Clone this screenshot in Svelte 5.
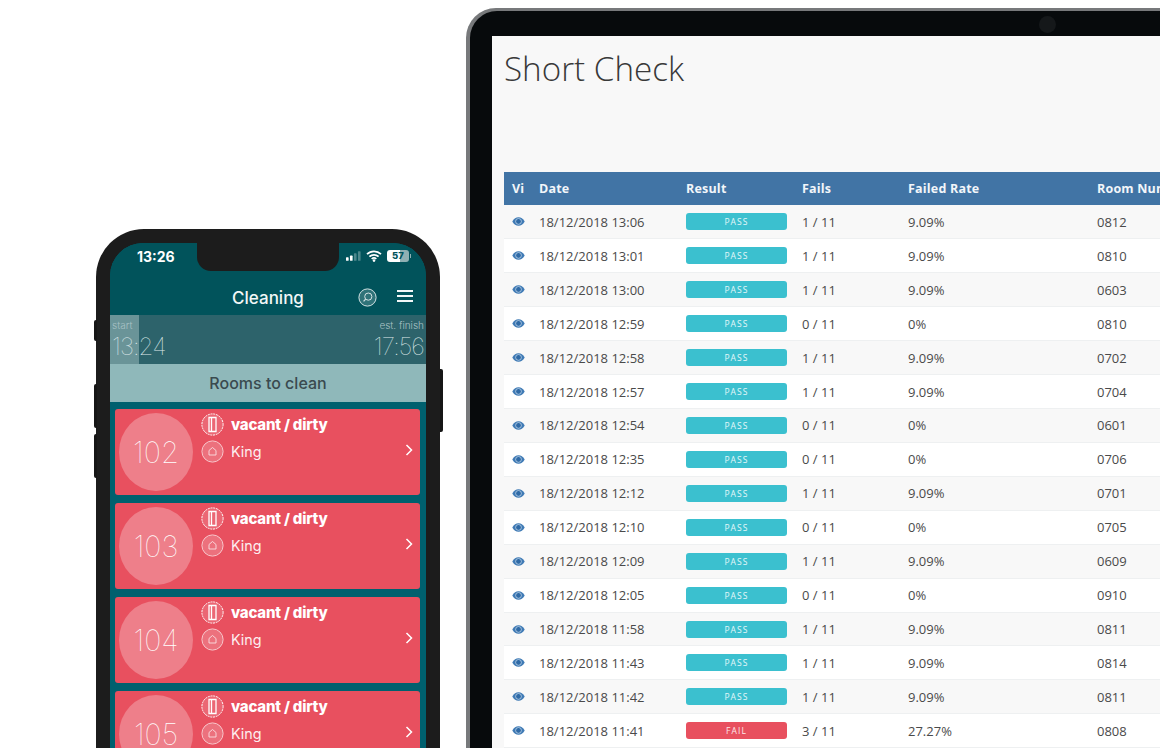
<script>
  const rooms = [102, 103, 104, 105];

  const checks = [
    ["18/12/2018 13:06", "PASS", "1 / 11", "9.09%", "0812"],
    ["18/12/2018 13:01", "PASS", "1 / 11", "9.09%", "0810"],
    ["18/12/2018 13:00", "PASS", "1 / 11", "9.09%", "0603"],
    ["18/12/2018 12:59", "PASS", "0 / 11", "0%", "0810"],
    ["18/12/2018 12:58", "PASS", "1 / 11", "9.09%", "0702"],
    ["18/12/2018 12:57", "PASS", "1 / 11", "9.09%", "0704"],
    ["18/12/2018 12:54", "PASS", "0 / 11", "0%", "0601"],
    ["18/12/2018 12:35", "PASS", "0 / 11", "0%", "0706"],
    ["18/12/2018 12:12", "PASS", "1 / 11", "9.09%", "0701"],
    ["18/12/2018 12:10", "PASS", "0 / 11", "0%", "0705"],
    ["18/12/2018 12:09", "PASS", "1 / 11", "9.09%", "0609"],
    ["18/12/2018 12:05", "PASS", "0 / 11", "0%", "0910"],
    ["18/12/2018 11:58", "PASS", "1 / 11", "9.09%", "0811"],
    ["18/12/2018 11:43", "PASS", "1 / 11", "9.09%", "0814"],
    ["18/12/2018 11:42", "PASS", "1 / 11", "9.09%", "0811"],
    ["18/12/2018 11:41", "FAIL", "3 / 11", "27.27%", "0808"]
  ];
</script>

<div class="stage">
  <div class="phone">
    <span class="btn b1"></span>
    <span class="btn b2"></span>
    <span class="btn b3"></span>
    <span class="btn b4"></span>
    <div class="screen">
      <div class="notch"></div>
      <header class="app-head">
        <div class="status">
          <span class="clock">13:26</span>
          <div class="status-icons">
            <svg width="15" height="10" viewBox="0 0 17 11">
              <rect x="0" y="7" width="3" height="4" rx="0.7" fill="#fff" />
              <rect x="4.5" y="5" width="3" height="6" rx="0.7" fill="#fff" />
              <rect x="9" y="2.5" width="3" height="8.5" rx="0.7" fill="#fff" opacity="0.3" />
              <rect x="13.5" y="0" width="3" height="11" rx="0.7" fill="#fff" opacity="0.3" />
            </svg>
            <svg width="16" height="12" viewBox="0 0 16 12">
              <path d="M1 4.2a10 10 0 0 1 14 0M3.4 6.7a6.6 6.6 0 0 1 9.2 0M5.7 9a3.3 3.3 0 0 1 4.6 0" fill="none" stroke="#fff" stroke-width="1.7" />
              <circle cx="8" cy="10.6" r="1.3" fill="#fff" />
            </svg>
            <span class="batt">57</span>
          </div>
        </div>
        <div class="title-row">
          <span class="app-title">Cleaning</span>
          <svg class="search" width="19" height="19" viewBox="0 0 19 19">
            <circle cx="9.5" cy="9.5" r="8.6" fill="#ffffff30" stroke="#d5e3e4" stroke-width="1" />
            <circle cx="10.3" cy="8.6" r="3.6" fill="none" stroke="#d5e3e4" stroke-width="1" />
            <path d="M7.6 11.2 5.6 13.4" stroke="#d5e3e4" stroke-width="1.2" />
          </svg>
          <div class="burger"><i></i><i></i><i></i></div>
        </div>
      </header>

      <div class="timeband">
        <div class="progress"></div>
        <div class="time-col">
          <span class="time-label">start</span>
          <span class="time">13:24</span>
        </div>
        <div class="time-col right">
          <span class="time-label">est. finish</span>
          <span class="time">17:56</span>
        </div>
      </div>

      <div class="section">Rooms to clean</div>

      <div class="rooms">
        {#each rooms as room}
          <div class="room">
            <div class="num">{room}</div>
            <div class="info">
              <div class="line">
                <svg class="ic" width="23" height="23" viewBox="0 0 23 23">
                  <circle cx="11.5" cy="11.5" r="10.6" fill="#ffffff22" stroke="#fff" stroke-width="1" stroke-dasharray="2 0.8" />
                  <path d="M8 4.5h7v14H8zM10.5 5v13" fill="none" stroke="#fff" stroke-width="1.3" />
                </svg>
                <strong>vacant / dirty</strong>
              </div>
              <div class="line">
                <svg class="ic" width="23" height="23" viewBox="0 0 23 23">
                  <circle cx="11.5" cy="11.5" r="10.6" fill="#ffffff30" stroke="#f7c6cb" stroke-width="1" />
                  <path d="M8 15v-4.5l3.5-3 3.5 3V15z" fill="none" stroke="#fbdfe2" stroke-width="0.9" />
                </svg>
                <span>King</span>
              </div>
            </div>
            <svg class="chev" width="8" height="12" viewBox="0 0 8 12">
              <path d="M1.5 1 6.5 6 1.5 11" fill="none" stroke="#fff" stroke-width="1.5" />
            </svg>
          </div>
        {/each}
      </div>
    </div>
  </div>

  <div class="laptop">
    <div class="bezel">
      <span class="camera"></span>
      <div class="display">
        <h1>Short Check</h1>
        <table>
          <thead>
            <tr>
              <th class="c-vi">Vi</th>
              <th class="c-date">Date</th>
              <th class="c-res">Result</th>
              <th class="c-fails">Fails</th>
              <th class="c-rate">Failed Rate</th>
              <th class="c-room">Room Number</th>
            </tr>
          </thead>
          <tbody>
            {#each checks as row}
              <tr>
                <td>
                  <svg class="eye" width="13" height="9" viewBox="0 0 13 9">
                    <path d="M0.3 4.5C2 1.6 4 0.3 6.5 0.3s4.5 1.3 6.2 4.2C11 7.4 9 8.7 6.5 8.7S2 7.4 0.3 4.5z" fill="#3f7ab5" />
                    <circle cx="6.5" cy="4.4" r="2.9" fill="#2f6aa6" stroke="#cfe0ef" stroke-width="0.7" />
                  </svg>
                </td>
                <td>{row[0]}</td>
                <td><span class="badge" class:fail={row[1] === "FAIL"}>{row[1]}</span></td>
                <td>{row[2]}</td>
                <td>{row[3]}</td>
                <td>{row[4]}</td>
              </tr>
            {/each}
          </tbody>
        </table>
      </div>
    </div>
  </div>
</div>

<style>
  :global(body) {
    background: #fff;
    overflow: hidden;
  }

  .stage {
    display: flex;
    align-items: flex-start;
    height: 748px;
    overflow: hidden;
    padding-left: 96px;
    box-sizing: border-box;
  }

  /* phone */
  .phone {
    position: relative;
    flex: none;
    width: 344px;
    margin-top: 229px;
    padding: 14px 14px 0;
    box-sizing: border-box;
    height: 560px;
    background: #1c1c1c;
    border-radius: 48px 48px 0 0;
    font-family: Inter, "Noto Sans", sans-serif;
  }

  .btn {
    position: absolute;
    background: #161616;
    width: 3px;
    left: -2px;
    border-radius: 2px 0 0 2px;
  }
  .b1 { top: 91px; height: 21px; }
  .b2 { top: 155px; height: 44px; }
  .b3 { top: 205px; height: 44px; }
  .b4 { left: auto; right: -3px; top: 140px; height: 63px; border-radius: 0 2px 2px 0; }

  .screen {
    position: relative;
    width: 316px;
    height: 546px;
    overflow: hidden;
    border-radius: 33px 33px 0 0;
    background: #00606e;
  }

  .notch {
    position: absolute;
    left: 87px;
    top: 0;
    width: 142px;
    height: 28px;
    background: #1c1c1c;
    border-radius: 0 0 14px 14px;
  }

  .app-head {
    height: 72px;
    background: #01535b;
    color: #fff;
    box-sizing: border-box;
  }

  .status {
    display: flex;
    justify-content: space-between;
    align-items: center;
    height: 26px;
    padding: 0 17px 0 27px;
  }
  .clock {
    font-size: 14px;
    font-weight: 700;
  }
  .status-icons {
    display: flex;
    align-items: center;
    gap: 5px;
  }
  .batt {
    position: relative;
    width: 22px;
    height: 12px;
    line-height: 12px;
    border-radius: 3px;
    text-align: center;
    font-size: 9.5px;
    font-weight: 800;
    color: #01535b;
    background: linear-gradient(90deg, #fff 60%, #8fb0b3 60%);
  }
  .batt::after {
    content: "";
    position: absolute;
    right: -2px;
    top: 4px;
    width: 1.5px;
    height: 4px;
    background: #8fb0b3;
  }

  .title-row {
    position: relative;
    display: flex;
    align-items: center;
    justify-content: center;
    height: 46px;
    padding-top: 12px;
    box-sizing: border-box;
  }
  .app-title {
    font-size: 17px;
    font-weight: 500;
    color: #f2f7f7;
  }
  .search {
    position: absolute;
    left: 248px;
    top: 19px;
  }
  .burger {
    position: absolute;
    left: 287px;
    top: 21px;
    width: 16px;
    display: flex;
    flex-direction: column;
    gap: 3px;
  }
  .burger i {
    display: block;
    height: 2px;
    background: #f2f7f7;
  }

  .timeband {
    position: relative;
    display: flex;
    justify-content: space-between;
    height: 49px;
    background: #2d636b;
    padding: 4px 2px 0;
    box-sizing: border-box;
  }
  .progress {
    position: absolute;
    left: 0;
    top: 0;
    bottom: 0;
    width: 29px;
    background: #6a9498;
  }
  .time-col {
    position: relative;
    display: flex;
    flex-direction: column;
  }
  .time-col.right {
    align-items: flex-end;
  }
  .time-label {
    font-size: 10px;
    line-height: 12px;
    font-weight: 300;
    color: #a9c2c5;
  }
  .time {
    font-size: 24px;
    line-height: 32px;
    font-weight: 100;
    letter-spacing: -0.9px;
    color: #dfe9ea;
  }

  .section {
    height: 38px;
    line-height: 38px;
    text-align: center;
    background: #8fb8ba;
    color: #3a4a4f;
    font-size: 16px;
    font-weight: 500;
  }

  .rooms {
    display: flex;
    flex-direction: column;
    gap: 8px;
    padding: 7px 6px 0 5px;
  }
  .room {
    position: relative;
    display: flex;
    flex: none;
    height: 86px;
    padding: 4px;
    box-sizing: border-box;
    background: #e8505f;
    border-radius: 3px;
    color: #fff;
  }
  .num {
    flex: none;
    width: 74px;
    height: 78px;
    line-height: 80px;
    border-radius: 50%;
    background: #ee7f8a;
    text-align: center;
    font-size: 29px;
    font-weight: 100;
  }
  .info {
    margin-left: 8px;
    display: flex;
    flex-direction: column;
    gap: 4px;
  }
  .line {
    display: flex;
    align-items: center;
    gap: 7px;
    height: 23px;
  }
  .line strong {
    font-size: 15px;
    font-weight: 800;
    letter-spacing: -0.2px;
  }
  .line span {
    font-size: 14.3px;
    font-weight: 400;
    color: #fdeef0;
  }
  .chev {
    position: absolute;
    right: 7px;
    top: 35px;
  }

  /* laptop */
  .laptop {
    flex: none;
    width: 760px;
    margin-top: 8px;
    margin-left: 26px;
    height: 760px;
    padding: 3px 0 0 4px;
    box-sizing: border-box;
    background: #77797b;
    border-radius: 30px 0 0 0;
  }
  .bezel {
    position: relative;
    height: 100%;
    background: #070a0c;
    border-radius: 27px 0 0 0;
    padding: 25px 0 0 22px;
    box-sizing: border-box;
  }
  .camera {
    position: absolute;
    left: 569px;
    top: 5px;
    width: 17px;
    height: 17px;
    border-radius: 50%;
    background: #15181a;
  }
  .display {
    height: 100%;
    background: #f8f8f8;
    padding: 0 0 0 12px;
    box-sizing: border-box;
    overflow: hidden;
    font-family: "Open Sans", "Noto Sans", sans-serif;
  }
  h1 {
    margin: 0;
    height: 136px;
    padding-top: 9px;
    box-sizing: border-box;
    font-size: 33.2px;
    line-height: 48px;
    font-weight: 300;
    color: #393939;
  }

  table {
    table-layout: fixed;
    border-collapse: collapse;
    width: 740px;
    font-size: 13px;
    color: #4a4a4a;
  }
  th {
    height: 33px;
    padding: 0 0 0 8px;
    box-sizing: border-box;
    text-align: left;
    background: #4174a5;
    color: #f2f6fa;
    font-weight: 700;
    font-size: 12.5px;
    letter-spacing: 0.2px;
    white-space: nowrap;
  }
  .c-vi { width: 27px; }
  .c-date { width: 147px; }
  .c-res { width: 116px; }
  .c-fails { width: 106px; }
  .c-rate { width: 189px; }
  .c-room { width: auto; }

  td {
    height: 33.93px;
    padding: 0 0 0 8px;
    border-bottom: 1px solid #eef0f1;
    white-space: nowrap;
    box-sizing: border-box;
  }
  tbody tr:nth-child(even) {
    background: #fff;
  }
  .eye {
    display: block;
  }
  .badge {
    display: block;
    width: 101px;
    height: 17px;
    line-height: 17px;
    border-radius: 3px;
    text-align: center;
    background: #3bc0cf;
    color: #e6f7f9;
    font-size: 8.5px;
    font-weight: 400;
    letter-spacing: 1.1px;
  }
  .badge.fail {
    background: #e8505f;
    color: #fde8ea;
  }
</style>
